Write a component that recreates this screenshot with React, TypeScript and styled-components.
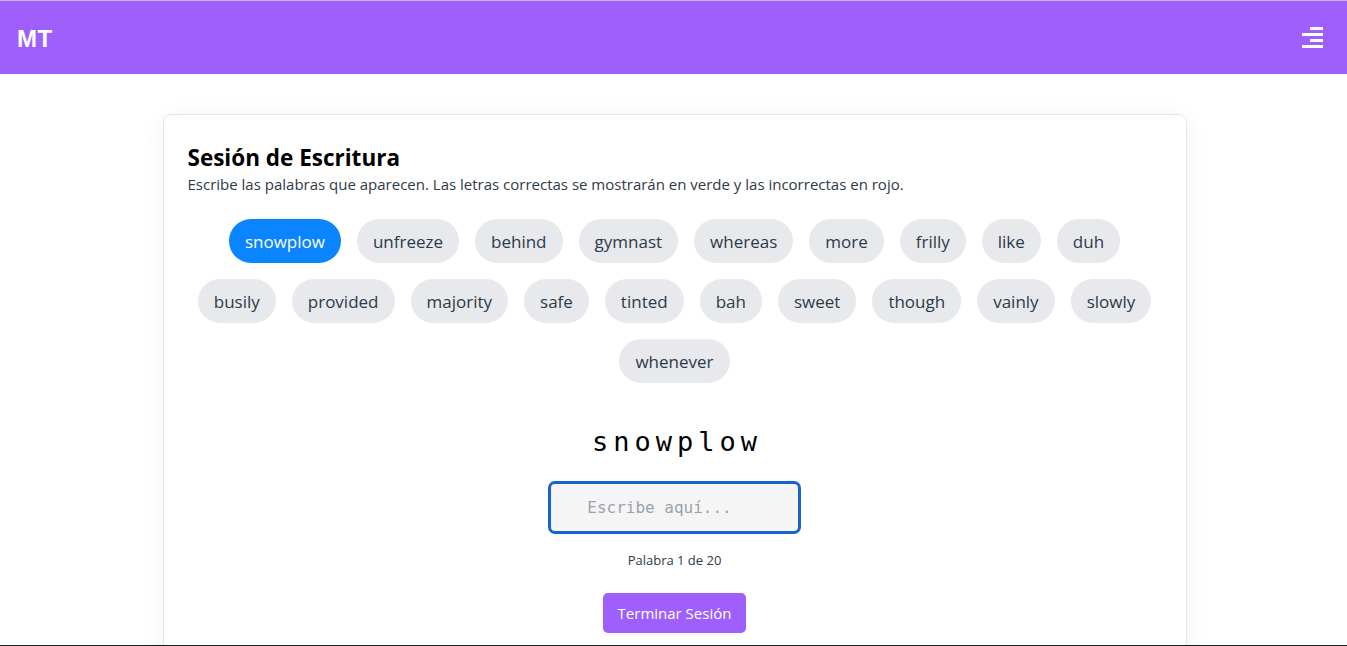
import React from "react";
import styled, { createGlobalStyle } from "styled-components";

const GlobalStyle = createGlobalStyle`
  html, body { margin: 0; padding: 0; background: #ffffff; overflow: hidden; }
  body { font-family: "Open Sans", "Noto Sans", sans-serif; color: #111; }
  * { box-sizing: border-box; }
`;

const Page = styled.div`
  height: 646px;
  overflow: hidden;
  border-top: 1px solid #c9b3f2;
  border-bottom: 1px solid #10201f;
  display: flex;
  flex-direction: column;
`;

const Header = styled.header`
  height: 73px;
  flex-shrink: 0;
  background: #9f5ffd;
  display: flex;
  align-items: center;
  justify-content: space-between;
  padding: 0 24px 0 17px;
`;

const Logo = styled.div`
  color: #ffffff;
  font-family: "Liberation Sans", Arial, sans-serif;
  font-weight: 700;
  font-size: 24px;
  letter-spacing: 0.5px;
  padding-top: 3px;
`;

const MenuButton = styled.button`
  background: none;
  border: none;
  padding: 0;
  width: 21px;
  height: 21px;
  display: flex;
  flex-direction: column;
  align-items: flex-end;
  gap: 3px;
  cursor: pointer;
`;

const MenuLine = styled.span<{ $short?: boolean }>`
  display: block;
  height: 3px;
  width: ${(p) => (p.$short ? "13px" : "21px")};
  background: #ffffff;
`;

const Main = styled.main`
  flex: 1;
  display: flex;
  justify-content: center;
  padding: 40px 0 0 2px;
`;

const Card = styled.section`
  width: 1024px;
  height: 700px;
  flex-shrink: 0;
  background: #ffffff;
  border: 1px solid #e6e6e6;
  border-radius: 8px;
  box-shadow: 0 4px 24px rgba(0, 0, 0, 0.06);
  padding: 28px 24px;
`;

const Title = styled.h2`
  margin: 0;
  font-size: 22.5px;
  font-weight: 700;
  color: #000;
  line-height: 30px;
`;

const Subtitle = styled.p`
  margin: 0;
  font-size: 15px;
  color: #2d3a4a;
  line-height: 22px;
`;

const Chips = styled.div`
  display: flex;
  flex-wrap: wrap;
  justify-content: center;
  gap: 16px;
  margin-top: 24px;
  padding: 0 10px;
`;

const Chip = styled.span<{ $active?: boolean }>`
  height: 44px;
  display: inline-flex;
  align-items: center;
  padding: 0 16px;
  border-radius: 22px;
  font-size: 17px;
  background: ${(p) => (p.$active ? "#0a84ff" : "#e8e9ec")};
  color: ${(p) => (p.$active ? "#ffffff" : "#2d3a4a")};
`;

const Practice = styled.div`
  display: flex;
  flex-direction: column;
  align-items: center;
  margin-top: 41px;
`;

const Word = styled.div`
  font-family: "DejaVu Sans Mono", "Liberation Mono", monospace;
  font-size: 27px;
  letter-spacing: 5px;
  color: #000;
  line-height: 36px;
  padding-left: 5px;
`;

const Input = styled.input`
  margin-top: 21px;
  width: 253px;
  height: 53px;
  border: 3px solid #1664d0;
  border-radius: 7px;
  background: #f5f5f5;
  font-family: "DejaVu Sans Mono", "Liberation Mono", monospace;
  font-size: 16px;
  text-align: center;
  padding: 0 42px 0 12px;
  outline: none;
  color: #111;
  caret-color: #000;
  &::placeholder { color: #9aa3ad; }
`;

const Counter = styled.div`
  margin-top: 17px;
  font-size: 13px;
  color: #2d3a4a;
  line-height: 18px;
`;

const EndButton = styled.button`
  margin-top: 24px;
  height: 40px;
  padding: 0 15px;
  border: none;
  border-radius: 5px;
  background: #9f5ffd;
  color: #ffffff;
  font-family: "Open Sans", "Noto Sans", sans-serif;
  font-size: 15px;
  cursor: pointer;
`;

const words = [
  "snowplow", "unfreeze", "behind", "gymnast", "whereas", "more", "frilly", "like", "duh",
  "busily", "provided", "majority", "safe", "tinted", "bah", "sweet", "though", "vainly", "slowly",
  "whenever",
];

export default function App() {
  return (
    <>
      <GlobalStyle />
      <Page>
        <Header>
          <Logo>MT</Logo>
          <MenuButton aria-label="menu">
            <MenuLine $short />
            <MenuLine />
            <MenuLine $short />
            <MenuLine />
          </MenuButton>
        </Header>
        <Main>
          <Card>
            <Title>Sesión de Escritura</Title>
            <Subtitle>
              Escribe las palabras que aparecen. Las letras correctas se mostrarán en verde y las incorrectas en rojo.
            </Subtitle>
            <Chips>
              {words.map((w, i) => (
                <Chip key={w} $active={i === 0}>{w}</Chip>
              ))}
            </Chips>
            <Practice>
              <Word>snowplow</Word>
              <Input placeholder="Escribe aquí..." autoFocus />
              <Counter>Palabra 1 de 20</Counter>
              <EndButton>Terminar Sesión</EndButton>
            </Practice>
          </Card>
        </Main>
      </Page>
    </>
  );
}
